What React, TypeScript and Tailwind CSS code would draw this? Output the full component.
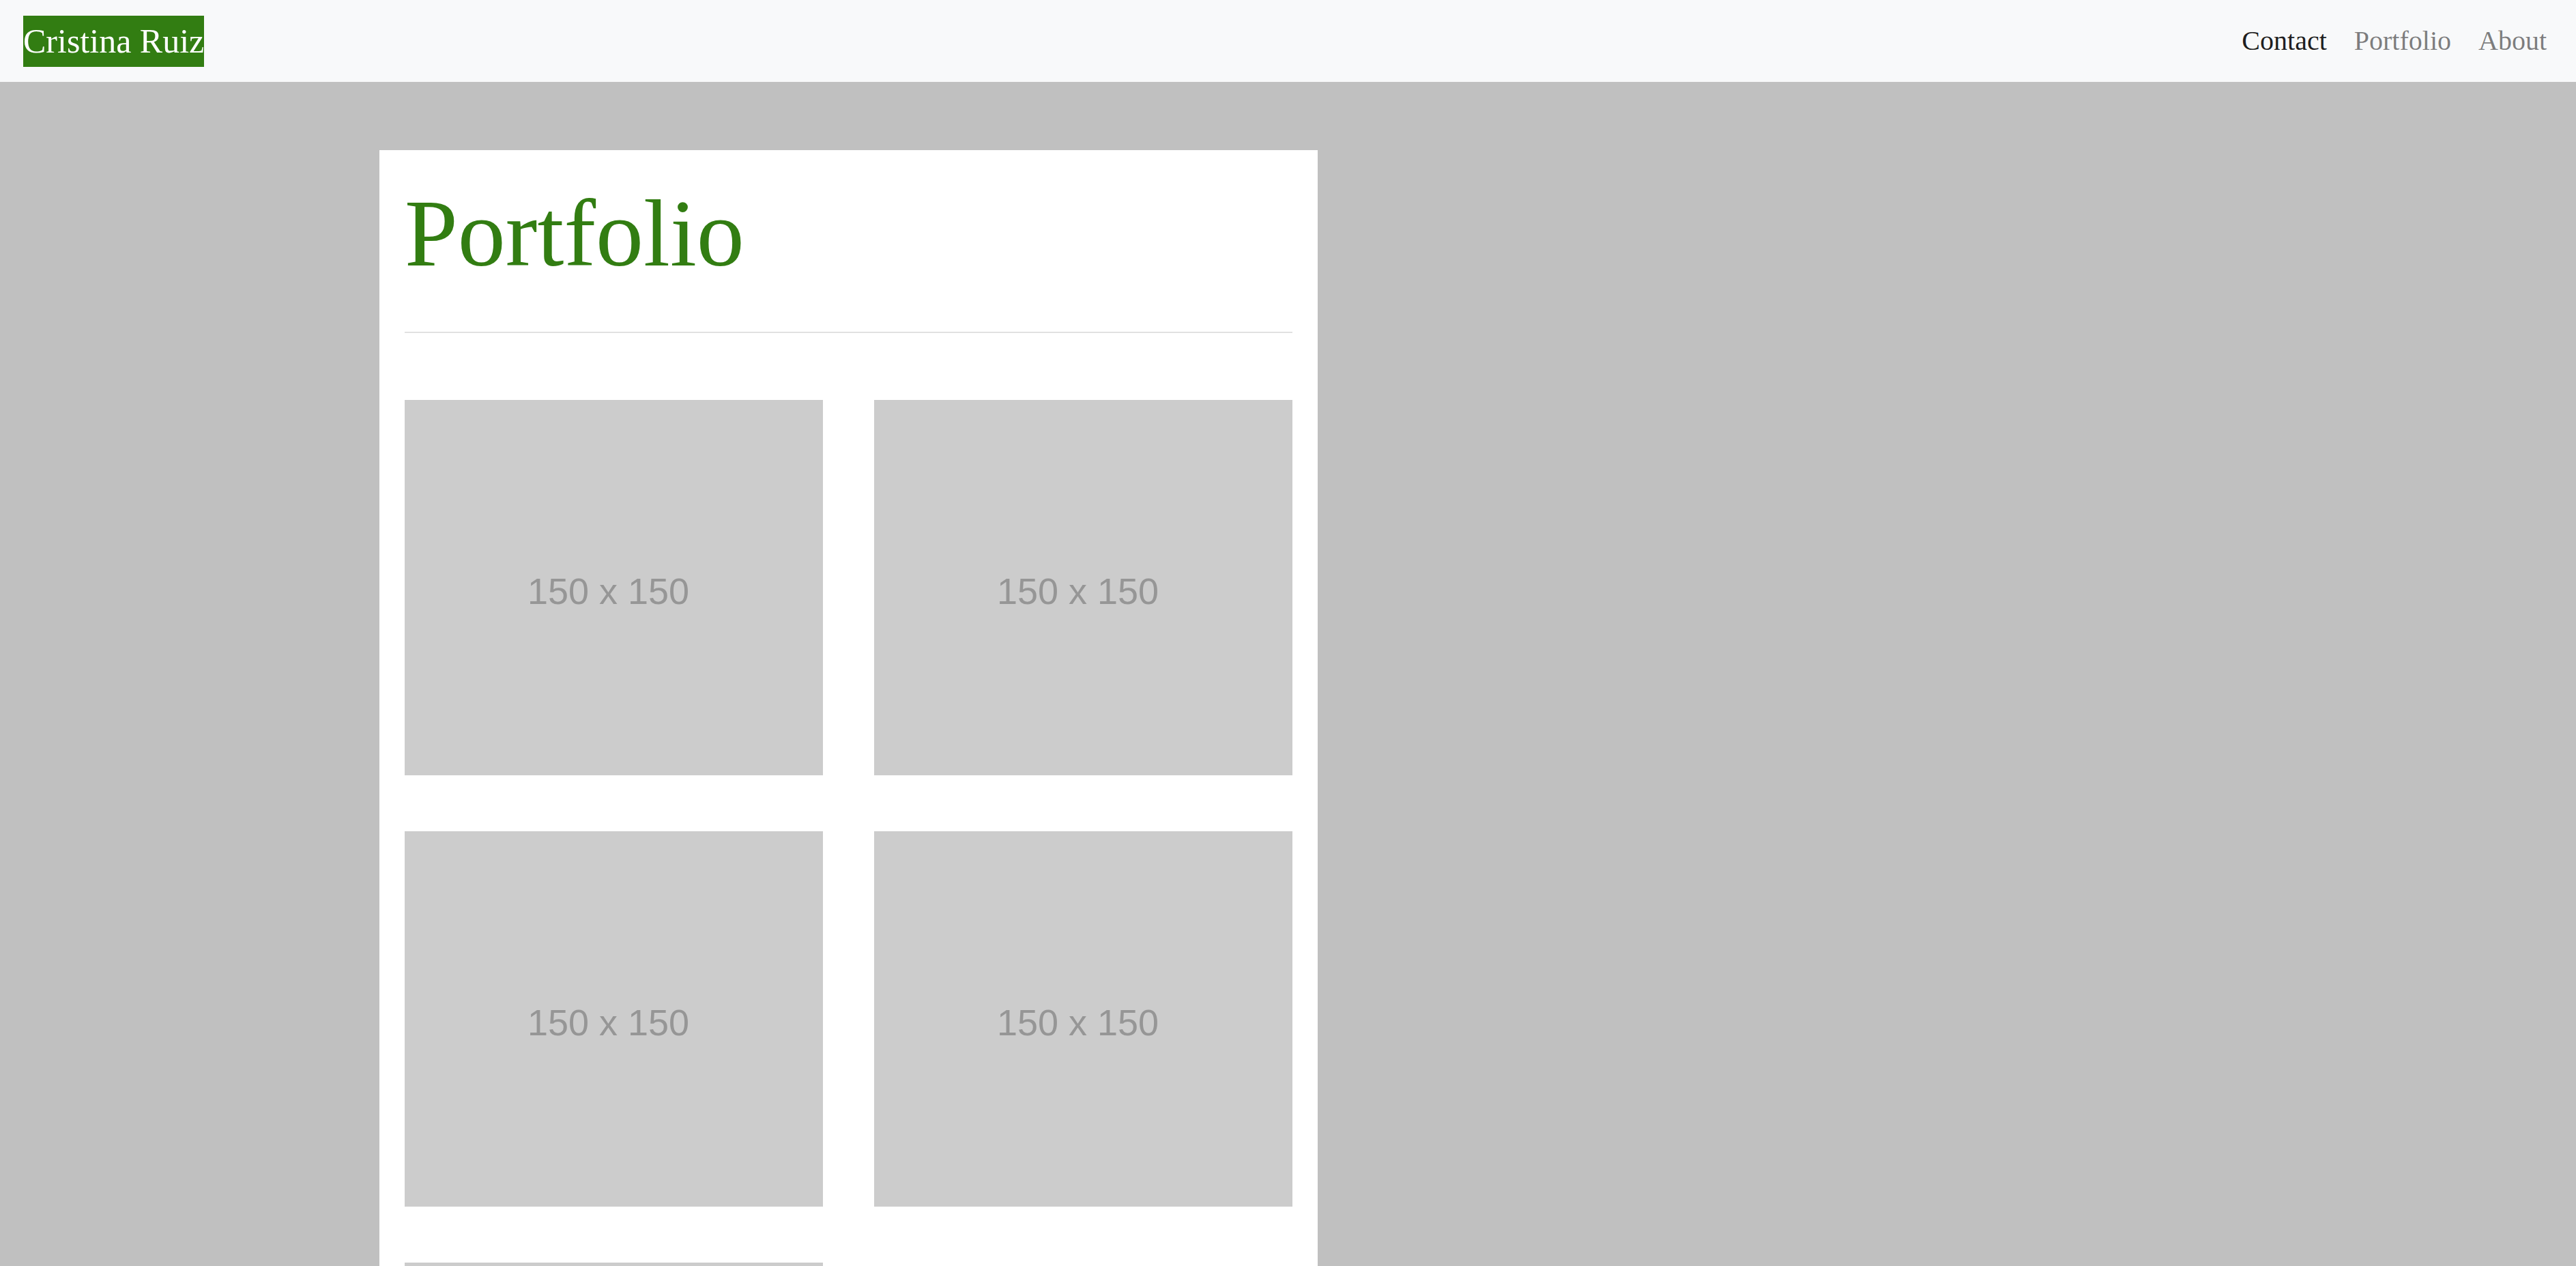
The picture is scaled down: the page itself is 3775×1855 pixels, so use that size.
import React from 'react';

const Placeholder: React.FC = () => (
  <div className="h-[550px] bg-[#cccccc] flex items-center justify-center pr-[16px] pt-[10px]">
    <span className="font-['Liberation_Sans',Arial,sans-serif] text-[54px] leading-none text-[#969696] whitespace-pre">
      150 x 150
    </span>
  </div>
);

const App: React.FC = () => {
  const links = [
    { label: 'Contact', active: true },
    { label: 'Portfolio', active: false },
    { label: 'About', active: false },
  ];

  return (
    <div className="min-h-[1855px] bg-[#c0c0c0] font-['Liberation_Serif','Times_New_Roman',serif]">
      {/* Navbar */}
      <nav className="h-[120px] bg-[#f8f9fa] flex items-center justify-between pl-[34px] pr-[23px]">
        <a className="bg-[#327d12] text-white text-[50px] leading-[75px] whitespace-nowrap">Cristina Ruiz</a>
        <ul className="flex items-center">
          {links.map((link) => (
            <li key={link.label}>
              <a
                className={
                  link.active
                    ? 'block px-[20px] text-[40px] leading-[60px] text-black/90'
                    : 'block px-[20px] text-[40px] leading-[60px] text-black/50'
                }
              >
                {link.label}
              </a>
            </li>
          ))}
        </ul>
      </nav>

      {/* Portfolio panel */}
      <div className="ml-[556px] mt-[100px] w-[1375px] bg-white px-[37px] pt-[38px] pb-[80px]">
        <h1 className="text-[140px] leading-[168px] text-[#327d12]">Portfolio</h1>
        <div className="mt-[60px] h-[2px] bg-[#e1e1e1]" />
        <div className="mt-[98px] grid grid-cols-2 gap-x-[75px] gap-y-[82px]">
          {[0, 1, 2, 3, 4].map((i) => (
            <Placeholder key={i} />
          ))}
        </div>
      </div>
    </div>
  );
};

export default App;
